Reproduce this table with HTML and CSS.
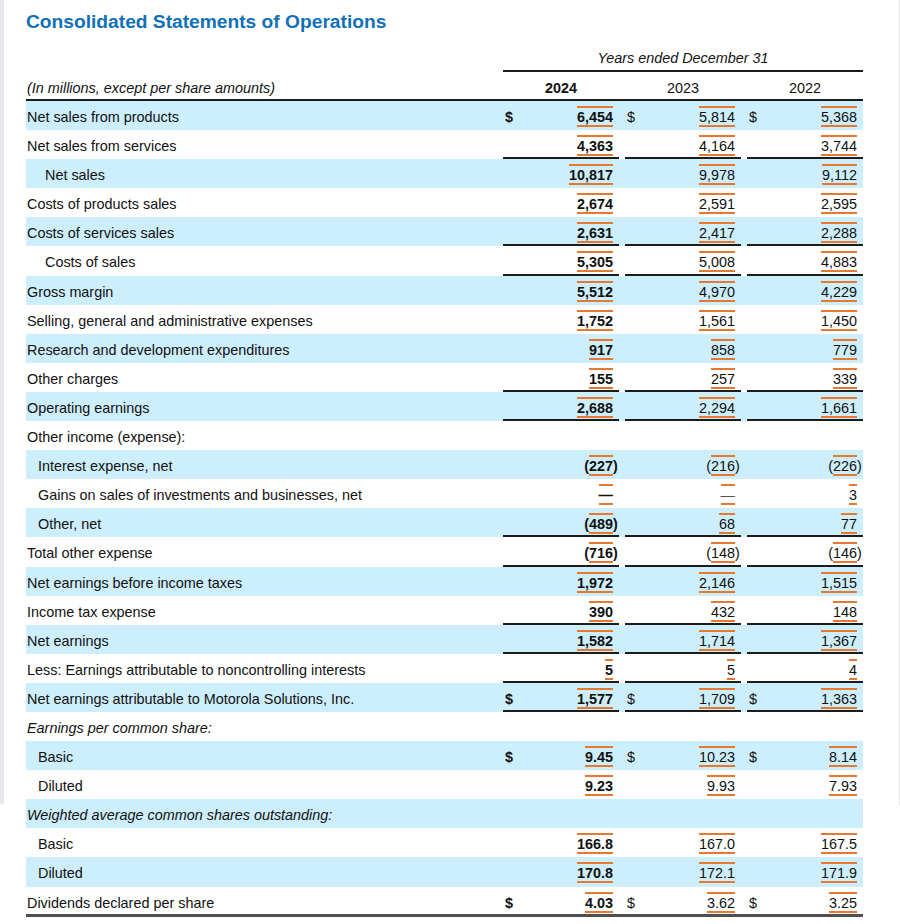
FILE: index.html
```html
<!DOCTYPE html>
<html lang="en">
<head>
<meta charset="utf-8">
<title>Consolidated Statements of Operations</title>
<link rel="stylesheet" href="styles.css">
</head>
<body>
<div class="page">
  <h1 class="title">Consolidated Statements of Operations</h1>
  <div class="statement">
    <div class="years">
      <div class="years-title">Years ended December 31</div>
    </div>
    <div class="head">
      <div class="head-lbl it">(In millions, except per share amounts)</div>
      <div class="yr b">2024</div>
      <div class="yr">2023</div>
      <div class="yr">2022</div>
    </div>
    <div class="rows">
      <div class="row alt">
        <div class="lbl">Net sales from products</div>
        <div class="val b"><span class="cur">$</span><span class="n"><span class="tag">6,454</span></span></div>
        <div class="val"><span class="cur">$</span><span class="n"><span class="tag">5,814</span></span></div>
        <div class="val"><span class="cur">$</span><span class="n"><span class="tag">5,368</span></span></div>
      </div>
      <div class="row ln">
        <div class="lbl">Net sales from services</div>
        <div class="val b"><span class="n"><span class="tag">4,363</span></span></div>
        <div class="val"><span class="n"><span class="tag">4,164</span></span></div>
        <div class="val"><span class="n"><span class="tag">3,744</span></span></div>
      </div>
      <div class="row alt">
        <div class="lbl in2">Net sales</div>
        <div class="val b"><span class="n"><span class="tag">10,817</span></span></div>
        <div class="val"><span class="n"><span class="tag">9,978</span></span></div>
        <div class="val"><span class="n"><span class="tag">9,112</span></span></div>
      </div>
      <div class="row">
        <div class="lbl">Costs of products sales</div>
        <div class="val b"><span class="n"><span class="tag">2,674</span></span></div>
        <div class="val"><span class="n"><span class="tag">2,591</span></span></div>
        <div class="val"><span class="n"><span class="tag">2,595</span></span></div>
      </div>
      <div class="row alt ln">
        <div class="lbl">Costs of services sales</div>
        <div class="val b"><span class="n"><span class="tag">2,631</span></span></div>
        <div class="val"><span class="n"><span class="tag">2,417</span></span></div>
        <div class="val"><span class="n"><span class="tag">2,288</span></span></div>
      </div>
      <div class="row ln">
        <div class="lbl in2">Costs of sales</div>
        <div class="val b"><span class="n"><span class="tag">5,305</span></span></div>
        <div class="val"><span class="n"><span class="tag">5,008</span></span></div>
        <div class="val"><span class="n"><span class="tag">4,883</span></span></div>
      </div>
      <div class="row alt">
        <div class="lbl">Gross margin</div>
        <div class="val b"><span class="n"><span class="tag">5,512</span></span></div>
        <div class="val"><span class="n"><span class="tag">4,970</span></span></div>
        <div class="val"><span class="n"><span class="tag">4,229</span></span></div>
      </div>
      <div class="row">
        <div class="lbl">Selling, general and administrative expenses</div>
        <div class="val b"><span class="n"><span class="tag">1,752</span></span></div>
        <div class="val"><span class="n"><span class="tag">1,561</span></span></div>
        <div class="val"><span class="n"><span class="tag">1,450</span></span></div>
      </div>
      <div class="row alt">
        <div class="lbl">Research and development expenditures</div>
        <div class="val b"><span class="n"><span class="tag">917</span></span></div>
        <div class="val"><span class="n"><span class="tag">858</span></span></div>
        <div class="val"><span class="n"><span class="tag">779</span></span></div>
      </div>
      <div class="row ln">
        <div class="lbl">Other charges</div>
        <div class="val b"><span class="n"><span class="tag">155</span></span></div>
        <div class="val"><span class="n"><span class="tag">257</span></span></div>
        <div class="val"><span class="n"><span class="tag">339</span></span></div>
      </div>
      <div class="row alt ln">
        <div class="lbl">Operating earnings</div>
        <div class="val b"><span class="n"><span class="tag">2,688</span></span></div>
        <div class="val"><span class="n"><span class="tag">2,294</span></span></div>
        <div class="val"><span class="n"><span class="tag">1,661</span></span></div>
      </div>
      <div class="row">
        <div class="lbl">Other income (expense):</div>
        <div class="val b"></div>
        <div class="val"></div>
        <div class="val"></div>
      </div>
      <div class="row alt">
        <div class="lbl in1">Interest expense, net</div>
        <div class="val b"><span class="n">(<span class="tag">227</span><span class="rp">)</span></span></div>
        <div class="val"><span class="n">(<span class="tag">216</span><span class="rp">)</span></span></div>
        <div class="val"><span class="n">(<span class="tag">226</span><span class="rp">)</span></span></div>
      </div>
      <div class="row">
        <div class="lbl in1">Gains on sales of investments and businesses, net</div>
        <div class="val b"><span class="n"><span class="tag">&mdash;</span></span></div>
        <div class="val"><span class="n"><span class="tag dash">&mdash;</span></span></div>
        <div class="val"><span class="n"><span class="tag">3</span></span></div>
      </div>
      <div class="row alt ln">
        <div class="lbl in1">Other, net</div>
        <div class="val b"><span class="n">(<span class="tag">489</span><span class="rp">)</span></span></div>
        <div class="val"><span class="n"><span class="tag">68</span></span></div>
        <div class="val"><span class="n"><span class="tag">77</span></span></div>
      </div>
      <div class="row ln">
        <div class="lbl">Total other expense</div>
        <div class="val b"><span class="n">(<span class="tag">716</span><span class="rp">)</span></span></div>
        <div class="val"><span class="n">(<span class="tag">148</span><span class="rp">)</span></span></div>
        <div class="val"><span class="n">(<span class="tag">146</span><span class="rp">)</span></span></div>
      </div>
      <div class="row alt">
        <div class="lbl">Net earnings before income taxes</div>
        <div class="val b"><span class="n"><span class="tag">1,972</span></span></div>
        <div class="val"><span class="n"><span class="tag">2,146</span></span></div>
        <div class="val"><span class="n"><span class="tag">1,515</span></span></div>
      </div>
      <div class="row ln">
        <div class="lbl">Income tax expense</div>
        <div class="val b"><span class="n"><span class="tag">390</span></span></div>
        <div class="val"><span class="n"><span class="tag">432</span></span></div>
        <div class="val"><span class="n"><span class="tag">148</span></span></div>
      </div>
      <div class="row alt ln">
        <div class="lbl">Net earnings</div>
        <div class="val b"><span class="n"><span class="tag">1,582</span></span></div>
        <div class="val"><span class="n"><span class="tag">1,714</span></span></div>
        <div class="val"><span class="n"><span class="tag">1,367</span></span></div>
      </div>
      <div class="row ln">
        <div class="lbl">Less: Earnings attributable to noncontrolling interests</div>
        <div class="val b"><span class="n"><span class="tag">5</span></span></div>
        <div class="val"><span class="n"><span class="tag">5</span></span></div>
        <div class="val"><span class="n"><span class="tag">4</span></span></div>
      </div>
      <div class="row alt ln">
        <div class="lbl">Net earnings attributable to Motorola Solutions, Inc.</div>
        <div class="val b"><span class="cur">$</span><span class="n"><span class="tag">1,577</span></span></div>
        <div class="val"><span class="cur">$</span><span class="n"><span class="tag">1,709</span></span></div>
        <div class="val"><span class="cur">$</span><span class="n"><span class="tag">1,363</span></span></div>
      </div>
      <div class="row">
        <div class="lbl it">Earnings per common share:</div>
        <div class="val b"></div>
        <div class="val"></div>
        <div class="val"></div>
      </div>
      <div class="row alt">
        <div class="lbl in1">Basic</div>
        <div class="val b"><span class="cur">$</span><span class="n"><span class="tag">9.45</span></span></div>
        <div class="val"><span class="cur">$</span><span class="n"><span class="tag">10.23</span></span></div>
        <div class="val"><span class="cur">$</span><span class="n"><span class="tag">8.14</span></span></div>
      </div>
      <div class="row">
        <div class="lbl in1">Diluted</div>
        <div class="val b"><span class="n"><span class="tag">9.23</span></span></div>
        <div class="val"><span class="n"><span class="tag">9.93</span></span></div>
        <div class="val"><span class="n"><span class="tag">7.93</span></span></div>
      </div>
      <div class="row alt">
        <div class="lbl it">Weighted average common shares outstanding:</div>
        <div class="val b"></div>
        <div class="val"></div>
        <div class="val"></div>
      </div>
      <div class="row">
        <div class="lbl in1">Basic</div>
        <div class="val b"><span class="n"><span class="tag">166.8</span></span></div>
        <div class="val"><span class="n"><span class="tag">167.0</span></span></div>
        <div class="val"><span class="n"><span class="tag">167.5</span></span></div>
      </div>
      <div class="row alt">
        <div class="lbl in1">Diluted</div>
        <div class="val b"><span class="n"><span class="tag">170.8</span></span></div>
        <div class="val"><span class="n"><span class="tag">172.1</span></span></div>
        <div class="val"><span class="n"><span class="tag">171.9</span></span></div>
      </div>
      <div class="row last">
        <div class="lbl">Dividends declared per share</div>
        <div class="val b"><span class="cur">$</span><span class="n"><span class="tag">4.03</span></span></div>
        <div class="val"><span class="cur">$</span><span class="n"><span class="tag">3.62</span></span></div>
        <div class="val"><span class="cur">$</span><span class="n"><span class="tag">3.25</span></span></div>
      </div>
    </div>
  </div>
</div>
</body>
</html>
```
FILE: styles.css
```css
html, body {
  margin: 0;
  padding: 0;
}

body {
  font-family: "Liberation Sans", Arial, sans-serif;
  font-size: 14.4px;
  color: #111;
  background:
    linear-gradient(#e9e9ed, #e9e9ed) left top / 4px 804px no-repeat,
    linear-gradient(#e2e2e2, #e2e2e2) right top / 1px 806px no-repeat,
    #fff;
  min-height: 924px;
}

.page {
  padding: 11px 0 0 26px;
  width: 837px;
}

.title {
  margin: 0;
  font-size: 19.2px;
  line-height: 22px;
  font-weight: 700;
  color: #1170b7;
}

.years,
.head,
.row {
  display: grid;
  grid-template-columns: 471px 116px 116px 116px;
  column-gap: 6px;
}

.years {
  padding-top: 17px;
}

.years-title {
  grid-column: 2 / 5;
  text-align: center;
  font-style: italic;
  line-height: 16px;
  padding-bottom: 4px;
  border-bottom: 2px solid #1a1a1a;
}

.head {
  padding-top: 8px;
  padding-bottom: 3px;
  line-height: 16px;
  border-bottom: 2px solid #1a1a1a;
}

.head-lbl {
  padding-left: 1px;
}

.yr {
  text-align: center;
}

.it {
  font-style: italic;
}

.b {
  font-weight: 700;
}

.rows {
  border-bottom: 3px solid #4f4f4f;
}

.row {
  height: 29.1px;
  box-sizing: border-box;
}

.row.last {
  height: 27px;
}

.row.alt {
  background: #cdeefc;
}

.lbl {
  padding: 8px 0 0 1px;
  line-height: 17px;
  white-space: nowrap;
}

.lbl.in1 {
  padding-left: 12px;
}

.lbl.in2 {
  padding-left: 19px;
}

.val {
  display: flex;
  padding: 8px 6px 0 2px;
  line-height: 17px;
  white-space: nowrap;
}

.ln .val {
  box-shadow: inset 0 -2px 0 #1c1c1c;
}

.n {
  margin-left: auto;
}

.tag {
  border-top: 2px solid #e6782f;
  border-bottom: 2px solid #e6782f;
  padding-top: 1px;
}

.tag.dash {
  color: #555;
}

.rp {
  margin-right: -0.333em;
}
```
